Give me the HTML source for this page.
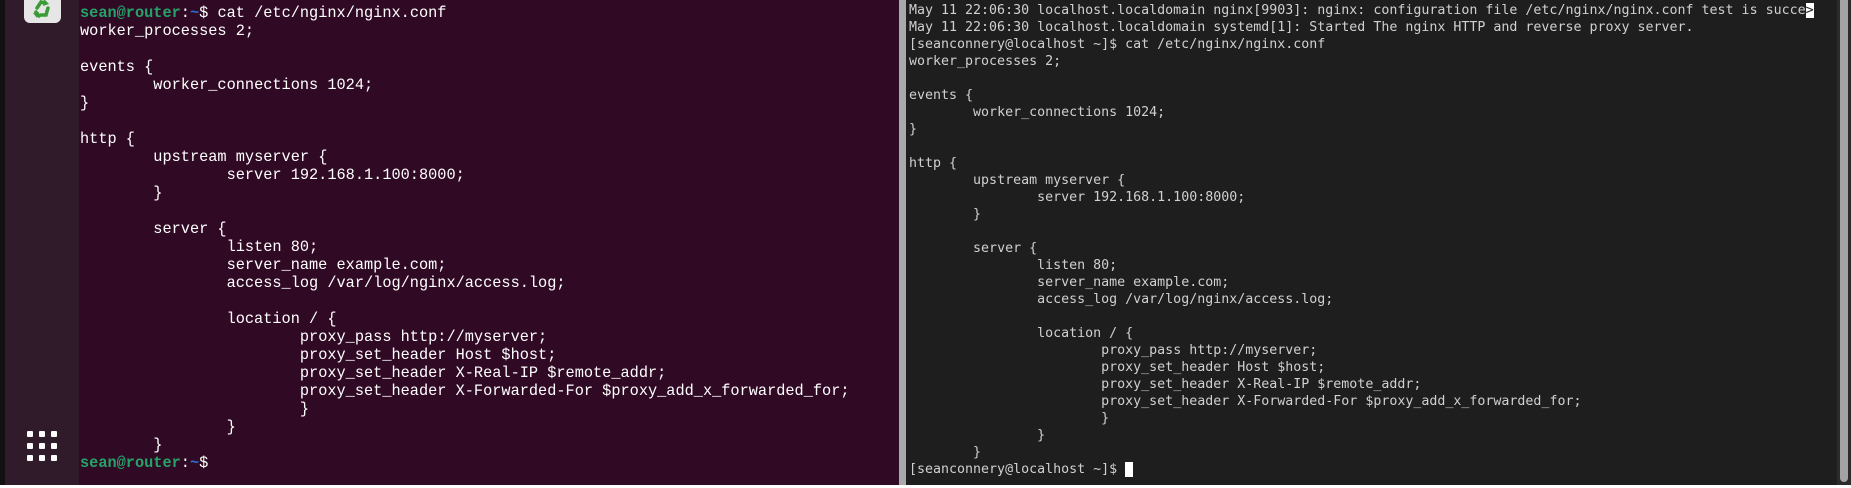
<!DOCTYPE html>
<html><head><meta charset="utf-8"><style>
html,body{margin:0;padding:0;}
body{width:1851px;height:488px;position:relative;overflow:hidden;background:#fff;}
#edge{position:absolute;left:0;top:0;width:5px;height:485px;background:#111;}
#side{position:absolute;left:5px;top:0;width:74px;height:485px;background:#2f1b29;}
#tile{position:absolute;left:19px;top:-6px;width:37px;height:29px;background:#e6e6e6;border-radius:6px;}
#left{position:absolute;left:79px;top:0;width:820px;height:485px;background:#300a24;}
#sep{position:absolute;left:899px;top:0;width:7px;height:485px;background:#a9a9a9;}
#right{position:absolute;left:906px;top:0;width:933px;height:485px;background:#1e1e1e;overflow:hidden;}
#track{position:absolute;left:1837px;top:0;width:14px;height:485px;background:#2b2b2b;}
#thumb{position:absolute;left:1840px;top:0;width:8px;height:482px;background:#a3a3a3;border-radius:0 0 4px 4px;}
pre{margin:0;position:absolute;white-space:pre;}
#lt{left:1px;top:4px;font:15.27px/18px "Liberation Mono",monospace;color:#fff;tab-size:8;}
#rt{left:3px;top:-15.5px;font:13.3px/17px "DejaVu Sans Mono","Liberation Mono",monospace;color:#d0d0d0;tab-size:8;}
.g{color:#26a269;font-weight:bold}.b{color:#2a6bd1;font-weight:bold}
.cur{background:#fff;color:#1e1e1e}
.dot{position:absolute;width:6px;height:6px;background:#fff;border-radius:1px;}
</style></head><body>
<div id="edge"></div>
<div id="side">
<div id="tile"><svg width="37" height="29" viewBox="0 0 37 29"><g fill="none" stroke="#3a9a35" stroke-width="3.5" stroke-linecap="round"><path d="M13 14 L17 8 L21 9"/><path d="M24 14 L22 21 L17 21"/><path d="M12 18 L15 22"/></g><g fill="#3a9a35"><path d="M20 5 L25 10 L19 12Z"/><path d="M13 24 L9 19 L15 18Z"/></g></svg></div>
</div>
<div class="dot" style="left:27px;top:431px"></div><div class="dot" style="left:39px;top:431px"></div><div class="dot" style="left:51px;top:431px"></div>
<div class="dot" style="left:27px;top:443px"></div><div class="dot" style="left:39px;top:443px"></div><div class="dot" style="left:51px;top:443px"></div>
<div class="dot" style="left:27px;top:455px"></div><div class="dot" style="left:39px;top:455px"></div><div class="dot" style="left:51px;top:455px"></div>
<div id="left"><pre id="lt"><span class="g">sean@router</span>:<span class="b">~</span>$ cat /etc/nginx/nginx.conf
worker_processes 2;

events {
	worker_connections 1024;
}

http {
	upstream myserver {
		server 192.168.1.100:8000;
	}

	server {
		listen 80;
		server_name example.com;
		access_log /var/log/nginx/access.log;

		location / {
			proxy_pass http://myserver;
			proxy_set_header Host $host;
			proxy_set_header X-Real-IP $remote_addr;
			proxy_set_header X-Forwarded-For $proxy_add_x_forwarded_for;
			}
		}
	}
<span class="g">sean@router</span>:<span class="b">~</span>$ </pre></div>
<div id="sep"></div>
<div id="right"><pre id="rt">May 11 22:06:30 localhost.localdomain systemd[1]: Starting The nginx HTTP and reverse proxy server...
May 11 22:06:30 localhost.localdomain nginx[9903]: nginx: configuration file /etc/nginx/nginx.conf test is succe<span class="cur">&gt;</span>
May 11 22:06:30 localhost.localdomain systemd[1]: Started The nginx HTTP and reverse proxy server.
[seanconnery@localhost ~]$ cat /etc/nginx/nginx.conf
worker_processes 2;

events {
	worker_connections 1024;
}

http {
	upstream myserver {
		server 192.168.1.100:8000;
	}

	server {
		listen 80;
		server_name example.com;
		access_log /var/log/nginx/access.log;

		location / {
			proxy_pass http://myserver;
			proxy_set_header Host $host;
			proxy_set_header X-Real-IP $remote_addr;
			proxy_set_header X-Forwarded-For $proxy_add_x_forwarded_for;
			}
		}
	}
[seanconnery@localhost ~]$ <span class="cur"> </span></pre></div>
<div id="track"></div><div id="thumb"></div>
</body></html>
